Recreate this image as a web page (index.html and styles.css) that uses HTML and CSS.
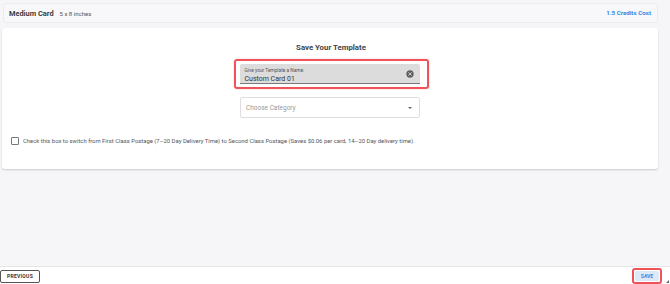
FILE: index.html
```html
<!DOCTYPE html>
<html lang="en">
<head>
    <meta charset="UTF-8">
    <meta name="viewport" content="width=device-width, initial-scale=1.0">
    <title>Save Template</title>
    <link rel="stylesheet" href="styles.css">
</head>
<body>
    <div class="page">
        <!-- Card summary -->
        <div class="summary">
            <div class="summary-left">
                <span class="card-name">Medium Card</span>
                <span class="card-size">5 x 8 inches</span>
            </div>
            <span class="credits">1.5 Credits Cost</span>
        </div>

        <!-- Save form -->
        <div class="panel">
            <h2 class="panel-title">Save Your Template</h2>

            <div class="name-wrap">
                <div class="name-field">
                    <div class="name-text">
                        <label class="name-label">Give your Template a Name:</label>
                        <span class="name-value">Custom Card 01</span>
                    </div>
                    <svg class="clear-icon" width="8" height="8" viewBox="0 0 24 24">
                        <circle cx="12" cy="12" r="11" fill="#5f5f5f"/>
                        <path d="M8 8l8 8M16 8l-8 8" stroke="#dcdcdc" stroke-width="2.6" stroke-linecap="round"/>
                    </svg>
                </div>
            </div>

            <div class="select-field">
                <span class="select-placeholder">Choose Category</span>
                <span class="select-arrow"></span>
            </div>

            <label class="postage">
                <span class="checkbox"></span>
                <span>Check this box to switch from First Class Postage (7&ndash;20 Day Delivery Time) to Second Class Postage (Saves $0.06 per card, 14&ndash;20 Day delivery time).</span>
            </label>
        </div>
    </div>

    <!-- Footer actions -->
    <div class="footer">
        <button class="prev-btn">Previous</button>
        <div class="save-wrap">
            <button class="save-btn">Save</button>
        </div>
        <span class="corner"></span>
    </div>
</body>
</html>
```

FILE: styles.css
```css
html, body {
    margin: 0;
    height: 100%;
}
body {
    font-family: Roboto, "Liberation Sans", sans-serif;
    background-color: #f6f5f7;
    display: flex;
    flex-direction: column;
    color: #333;
}
.page {
    flex: 1;
    padding: 3px 12px 0 2px;
    display: flex;
    flex-direction: column;
    gap: 5px;
}
.summary {
    height: 18px;
    background-color: #f8f7f9;
    border: 1px solid #ecebee;
    border-radius: 3px;
    display: flex;
    align-items: center;
    justify-content: space-between;
    padding: 0 6px 0 5px;
    margin-left: 1px;
}
.summary-left {
    display: flex;
    align-items: baseline;
    gap: 6px;
}
.card-name {
    font-size: 7.4px;
    font-weight: bold;
    color: #3c3c3c;
}
.card-size {
    font-size: 6px;
    color: #555;
}
.credits {
    font-size: 6.2px;
    font-weight: bold;
    color: #2f8be6;
}
.panel {
    background-color: white;
    border-radius: 3px;
    box-shadow: 0 1px 2px rgba(0, 0, 0, 0.18);
    height: 141px;
    display: flex;
    flex-direction: column;
    align-items: center;
    box-sizing: border-box;
    padding-top: 15px;
}
.panel-title {
    margin: 0;
    font-size: 7.8px;
    font-weight: bold;
    color: #444;
    margin-left: 2px;
}
.name-wrap {
    margin-top: 7px;
    border: 2px solid #ef5358;
    border-radius: 3px;
    padding: 3px 7px 3px 4px;
    box-shadow: 0 0 2px rgba(239, 83, 88, 0.35);
    margin-left: 2px;
}
.name-field {
    width: 180px;
    height: 20px;
    background-color: #dcdcdc;
    border-bottom: 1px solid #7a7a7a;
    border-radius: 2px 2px 0 0;
    display: flex;
    align-items: center;
    justify-content: space-between;
    padding: 0 6px 0 5px;
    box-sizing: border-box;
}
.name-text {
    display: flex;
    flex-direction: column;
    line-height: 1;
    padding-top: 5px;
}
.name-label {
    font-size: 4.8px;
    color: #555;
}
.name-value {
    font-size: 7px;
    color: #333;
    margin-top: 2px;
}
.select-field {
    margin-top: 8px;
    width: 180px;
    height: 21px;
    border: 1px solid #dedede;
    border-radius: 2px;
    box-sizing: border-box;
    display: flex;
    align-items: center;
    justify-content: space-between;
    padding: 0 7px 0 5px;
}
.select-placeholder {
    font-size: 6.5px;
    color: #9a9a9a;
}
.select-arrow {
    width: 0;
    height: 0;
    border-left: 2px solid transparent;
    border-right: 2px solid transparent;
    border-top: 2px solid #666;
}
.postage {
    align-self: flex-start;
    margin-top: 19px;
    margin-left: 9px;
    display: flex;
    align-items: center;
    gap: 4px;
    font-size: 5.9px;
    color: #555;
}
.checkbox {
    width: 6px;
    height: 6px;
    border: 1px solid #777;
    border-radius: 1px;
}
.footer {
    height: 18px;
    border-top: 1px solid #e6e6e6;
    background-color: white;
    display: flex;
    align-items: center;
    justify-content: space-between;
    padding: 1px 8px 0 0;
    box-sizing: border-box;
    position: relative;
}
.prev-btn {
    height: 13px;
    width: 40px;
    border: 1px solid #555;
    border-radius: 2px;
    background-color: white;
    font-family: inherit;
    font-size: 5px;
    font-weight: bold;
    letter-spacing: 0.3px;
    color: #333;
    text-transform: uppercase;
    padding: 0;
}
.save-wrap {
    border: 2px solid #ef5358;
    border-radius: 3px;
    padding: 1px;
    display: flex;
}
.save-btn {
    width: 24px;
    height: 10px;
    border: none;
    border-radius: 2px;
    background-color: #dde9f7;
    color: #2f8be6;
    font-family: inherit;
    font-size: 5px;
    font-weight: bold;
    text-transform: uppercase;
    padding: 0;
}
.corner {
    position: absolute;
    right: 1px;
    bottom: 1px;
    width: 0;
    height: 0;
    border-left: 3px solid transparent;
    border-bottom: 3px solid #666;
}
```
